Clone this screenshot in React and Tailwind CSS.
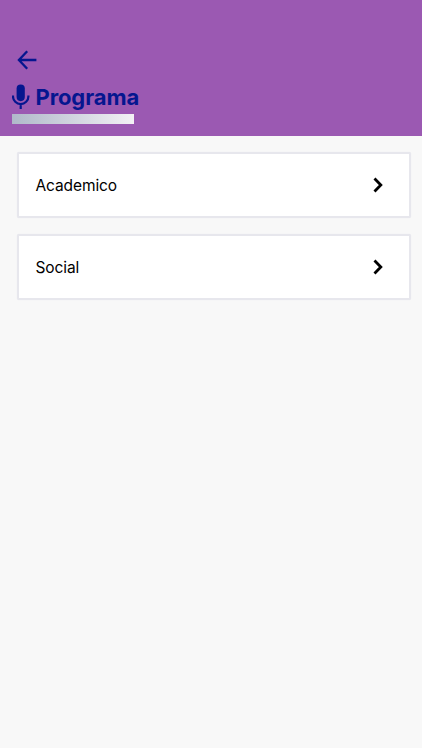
const sections = [
  { id: 'academico', label: 'Academico' },
  { id: 'social', label: 'Social' },
]

function BackIcon() {
  return (
    <svg width="20" height="20" viewBox="0 0 20 20" fill="none" stroke="currentColor" strokeWidth="2.3">
      <path d="M10.2 1.2 1.9 10l8.3 8.8M1.9 10H19.4" />
    </svg>
  )
}

function MicIcon() {
  return (
    <svg width="18" height="25" viewBox="0 0 18 25" fill="none">
      <rect x="4.6" y="0.4" width="8.2" height="16.8" rx="4.1" fill="currentColor" />
      <path d="M1 11.6v.8a7.7 7.7 0 0 0 15.4 0v-.8M8.7 20V25" stroke="currentColor" strokeWidth="2.2" />
    </svg>
  )
}

function ChevronIcon() {
  return (
    <svg width="10" height="16" viewBox="0 0 10 16" fill="none" stroke="currentColor" strokeWidth="2.8">
      <path d="M1.5 1.6 7.8 8l-6.3 6.4" />
    </svg>
  )
}

export default function App() {
  return (
    <div className="flex h-[750px] flex-col bg-white pb-0.5 font-['Inter',sans-serif]">
      <header className="h-[135.5px] shrink-0 bg-[#9b59b2] text-[#05168f]">
        <button type="button" aria-label="Volver" className="mt-[50px] ml-[17px] block h-5">
          <BackIcon />
        </button>
        <div className="mt-3.5 ml-3 flex h-[25px] items-center gap-[5.5px]">
          <MicIcon />
          <h1 className="pt-0.5 text-[22px] leading-[25px] font-bold tracking-[-0.1px]">Programa</h1>
        </div>
        <div className="mt-[5px] ml-[11.5px] h-2.5 w-[122px] bg-linear-to-r from-[#b0b9ca] to-[#f3f1f5]" />
      </header>
      <main className="flex flex-1 flex-col gap-4 bg-[#f8f8f8] pt-[16.5px] pr-[11px] pl-[16.5px]">
        {sections.map((section) => (
          <button
            key={section.id}
            type="button"
            className="flex h-[66px] items-center justify-between rounded-xs border-2 border-[#e7e7ed] bg-white pr-[26px] pl-[17px] text-black shadow-[0_0_1px_#e7e7ed]"
          >
            <span className="pt-0.5 text-[15.5px] leading-6 tracking-[-0.1px]">{section.label}</span>
            <ChevronIcon />
          </button>
        ))}
      </main>
    </div>
  )
}
